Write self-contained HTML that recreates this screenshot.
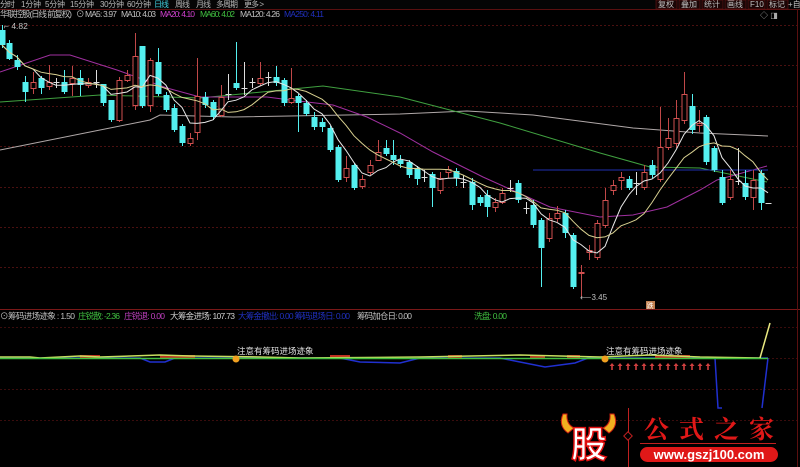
<!DOCTYPE html>
<html><head><meta charset="utf-8"><style>
body{margin:0;background:#000;width:800px;height:467px;overflow:hidden;font-family:"Liberation Sans","Noto Sans CJK SC",sans-serif}
svg{display:block}
</style></head><body>
<svg id="s" width="800" height="467" xmlns="http://www.w3.org/2000/svg" font-family="Liberation Sans, Noto Sans CJK SC, sans-serif">
<rect width="800" height="467" fill="#000"/>
<rect x="0" y="0" width="800" height="9" fill="#050505"/>
<line x1="0" y1="9.5" x2="800" y2="9.5" stroke="#5a1010"/>
<g font-size="8" fill="#b8b8b8" lengthAdjust="spacingAndGlyphs">
<text x="0" y="7" textLength="15">分时</text><text x="21" y="7" textLength="20">1分钟</text><text x="45" y="7" textLength="20">5分钟</text><text x="70" y="7" textLength="24">15分钟</text><text x="100" y="7" textLength="24">30分钟</text><text x="127" y="7" textLength="24">60分钟</text><text x="154" y="7" textLength="15" fill="#3fd0e0">日线</text><text x="175" y="7" textLength="15">周线</text><text x="196" y="7" textLength="15">月线</text><text x="216" y="7" textLength="22">多周期</text><text x="244" y="7" textLength="20">更多 &gt;</text>
</g>
<g font-size="8" fill="#c0c0c0">
<rect x="656" y="0" width="21" height="9" fill="#1a0505" stroke="#6a1515" stroke-width="0.6"/><text x="658" y="7">复权</text>
<rect x="679" y="0" width="21" height="9" fill="#1a0505" stroke="#6a1515" stroke-width="0.6"/><text x="681" y="7">叠加</text>
<rect x="702" y="0" width="21" height="9" fill="#1a0505" stroke="#6a1515" stroke-width="0.6"/><text x="704" y="7">统计</text>
<rect x="725" y="0" width="21" height="9" fill="#1a0505" stroke="#6a1515" stroke-width="0.6"/><text x="727" y="7">画线</text>
<rect x="748" y="0" width="17" height="9" fill="#1a0505" stroke="#6a1515" stroke-width="0.6"/><text x="750" y="7">F10</text>
<rect x="767" y="0" width="21" height="9" fill="#1a0505" stroke="#6a1515" stroke-width="0.6"/><text x="769" y="7">标记</text>
<text x="788" y="7">+自</text>
</g>
<g font-size="8.5" fill="#c0c0c0" lengthAdjust="spacingAndGlyphs">
<text x="0" y="17" textLength="72">华联控股(日线 前复权)</text><text x="76" y="17">⊙</text><text x="85" y="17" textLength="32">MA5: 3.97</text><text x="121" y="17" textLength="35">MA10: 4.03</text><text x="160" y="17" textLength="35" fill="#d040d0">MA20: 4.10</text><text x="200" y="17" textLength="35" fill="#40c040">MA60: 4.02</text><text x="240" y="17" textLength="40">MA120: 4.26</text><text x="284" y="17" textLength="40" fill="#2030c0">MA250: 4.11</text>
</g>
<text x="760" y="18" font-size="8" fill="#aaa">◇ ◨</text>
<g id="grid"></g>
<line x1="0" y1="309.5" x2="800" y2="309.5" stroke="#7a1818"/>
<line x1="797.5" y1="10" x2="797.5" y2="467" stroke="#5a1010"/>
<text x="4" y="29" font-size="8.5" fill="#c0c0c0">⌐ 4.82</text>
<g id="cand"></g>
<text x="580" y="300" font-size="8" fill="#c0c0c0">⟵3.45</text>
<rect x="646" y="301" width="9" height="8" fill="#c08050"/><text x="647" y="308" font-size="6.5" fill="#fff">跌</text>
<g font-size="8.5" fill="#c0c0c0" lengthAdjust="spacingAndGlyphs">
<text x="0" y="319">⊙</text>
<text x="8" y="319" textLength="67">筹码进场迹象 : 1.50</text>
<text x="78" y="319" textLength="42" fill="#40c040">庄锐散: -2.36</text>
<text x="124" y="319" textLength="41" fill="#c040c0">庄锐退: 0.00</text>
<text x="170" y="319" textLength="65" fill="#d0d0d0">大筹金进场: 107.73</text>
<text x="238" y="319" textLength="112" fill="#2030c0">大筹金撤出: 0.00 筹码退场日: 0.00</text>
<text x="357" y="319" textLength="55">筹码加仓日: 0.00</text>
<text x="474" y="319" textLength="33" fill="#40c040">洗盘: 0.00</text>
</g>
<g id="low"></g>
<path d="M563 414 Q558 426 568 433 L574 428 Q566 424 567 414Z" fill="#f0b020" stroke="#d02010"/>
<path d="M614 414 Q619 426 609 433 L603 428 Q611 424 610 414Z" fill="#f0b020" stroke="#d02010"/>
<text x="571" y="457" font-size="36" font-weight="bold" fill="#fff" stroke="#e01010" stroke-width="1.5" font-family="Noto Sans CJK SC, sans-serif">股</text>
<line x1="628.5" y1="408" x2="628.5" y2="467" stroke="#c02020"/>
<rect x="625" y="433" width="6" height="6" transform="rotate(45 628 436)" fill="#000" stroke="#c02020"/>
<text x="644" y="438" font-size="25" fill="#e01818" letter-spacing="10" font-family="Noto Serif CJK SC, serif" font-weight="bold">公式之家</text>
<line x1="640" y1="443.5" x2="776" y2="443.5" stroke="#c02020"/>
<rect x="640" y="447" width="138" height="15" rx="7.5" fill="#e01818"/>
<text x="709" y="459" font-size="13" font-weight="bold" fill="#fff" text-anchor="middle">www.gszj100.com</text>
</svg>
<script>
var NS="http://www.w3.org/2000/svg";
function el(p,t,a){var e=document.createElementNS(NS,t);for(var k in a)e.setAttribute(k,a[k]);p.appendChild(e);return e;}
var g=document.getElementById('grid');
[25,65,106,146,187,227,267].forEach(function(y){el(g,'line',{x1:0,y1:y+.5,x2:797,y2:y+.5,stroke:'#4a1010','stroke-dasharray':'2,2'});});
[327,358,389,420].forEach(function(y){el(g,'line',{x1:0,y1:y+.5,x2:797,y2:y+.5,stroke:'#3a0c0c','stroke-dasharray':'2,2'});});
var D=[[2,30,45,'c',25,48],[9,43,59,'c',40,60],[17,60,67,'c',55,70],[25,82,92,'c',76,102],[33,82,88,'r',72,94],[41,78,88,'c',76,94],[49,82,86,'r',65,90],[56,82,83,'x',78,88],[64,82,92,'c',70,94],[72,78,83,'r',66,96],[80,78,85,'c',70,96],[88,82,85,'r',78,88],[96,82,83,'x',70,88],[103,84,103,'c',84,106],[111,100,120,'c',100,122],[119,80,120,'r',77,122],[127,75,80,'r',70,82],[135,56,105,'r',33,110],[142,46,106,'c',46,108],[150,60,105,'r',58,112],[158,62,94,'c',48,96],[166,95,110,'c',92,112],[174,108,130,'c',104,132],[182,126,143,'c',124,146],[190,138,143,'r',133,146],[197,96,132,'r',58,140],[205,97,105,'c',92,108],[213,102,117,'c',100,120],[221,97,115,'r',85,117],[228,94,95,'x',74,100],[236,83,88,'c',42,90],[244,88,89,'x',62,95],[252,82,83,'x',78,88],[260,78,83,'r',62,86],[268,77,78,'x',72,86],[276,77,83,'c',66,86],[284,80,103,'c',78,106],[291,98,102,'r',68,104],[298,96,103,'c',94,132],[306,103,114,'c',100,116],[314,117,127,'c',112,130],[322,122,127,'c',118,132],[330,128,150,'c',126,152],[338,147,180,'c',145,182],[346,168,177,'r',156,182],[354,165,188,'c',163,190],[362,179,186,'r',175,189],[370,165,172,'r',160,175],[378,152,160,'r',140,160],[386,148,154,'c',140,156],[393,155,160,'c',140,165],[400,160,164,'c',155,168],[409,162,175,'c',160,178],[417,168,179,'c',166,185],[424,177,178,'x',170,182],[432,174,188,'c',172,207],[440,178,190,'r',172,194],[448,169,172,'r',166,178],[456,171,178,'c',168,186],[463,182,183,'x',175,188],[472,182,205,'c',178,210],[480,197,203,'c',195,206],[487,195,207,'c',190,217],[495,202,207,'r',198,212],[502,193,202,'r',188,204],[510,188,189,'x',180,192],[518,183,200,'c',180,203],[526,208,209,'x',202,214],[533,205,225,'c',200,228],[541,220,248,'c',218,287],[549,218,238,'r',213,242],[557,213,218,'r',206,222],[565,213,233,'c',210,238],[573,235,287,'c',233,289],[581,272,273,'r',265,297],[589,250,252,'r',245,260],[597,223,257,'r',220,260],[605,200,225,'r',188,228],[613,185,190,'r',180,195],[621,177,180,'r',172,190],[629,179,188,'c',176,190],[636,183,184,'x',172,195],[644,172,187,'r',165,190],[652,165,175,'c',160,178],[660,147,179,'r',107,182],[668,138,147,'r',118,150],[676,118,143,'r',100,148],[684,94,120,'r',72,124],[692,106,130,'c',94,134],[699,123,125,'r',110,132],[706,117,162,'c',115,165],[714,148,170,'c',146,172],[722,177,203,'c',170,205],[730,179,197,'r',170,200],[738,181,182,'x',148,185],[745,183,197,'c',170,200],[753,180,197,'r',170,210],[761,173,203,'c',170,210],[768,203,204,'x',203,204]];
var c=document.getElementById('cand');
function line(pts,col){el(c,'polyline',{points:pts.map(function(p){return p.join(',')}).join(' '),fill:'none',stroke:col,'stroke-width':1});}
line([[0,150],[150,120],[160,115],[233,117],[400,114],[467,111],[533,115],[633,128],[700,133],[768,136]],'#b0a8a8');
line([[0,102],[100,95],[200,98],[323,86],[400,97],[500,123],[600,153],[650,167],[700,168],[767,182]],'#40a040');
line([[0,72],[50,55],[70,55],[117,70],[167,88],[200,97],[267,97],[290,100],[333,105],[367,117],[400,133],[433,152],[483,177],[550,207],[600,217],[633,215],[667,207],[700,190],[717,180],[767,166]],'#a030a0');
line([[533,170],[768,170]],'#2030b0');
D.forEach(function(d){
  var x=d[0],col=d[3]=='c'?'#54f0f0':(d[3]=='r'?'#d05050':'#e0e0e0');
  el(c,'line',{x1:x+.5,y1:d[4],x2:x+.5,y2:d[5],stroke:d[3]=='c'?'#54f0f0':(d[3]=='r'?'#c04848':'#ddd')});
  if(d[3]=='c')el(c,'rect',{x:x-2.5,y:d[1],width:6,height:Math.max(1,d[2]-d[1]),fill:col});
  else if(d[3]=='r')el(c,'rect',{x:x-2,y:d[1]+.5,width:5,height:Math.max(1,d[2]-d[1]),fill:'#000',stroke:col});
  else el(c,'line',{x1:x-2.5,y1:d[1]+.5,x2:x+3.5,y2:d[1]+.5,stroke:'#ddd'});
});
var cl=D.map(function(d){return d[3]=='c'?d[2]:d[1];});
function ma(n,col){var p=[];for(var i=0;i<cl.length;i++){var s=0,k=0;for(var j=Math.max(0,i-n+1);j<=i;j++){s+=cl[j];k++;}p.push([D[i][0],(s/k).toFixed(1)]);}line(p,col);}
ma(5,'#e8e8e8');ma(10,'#d8d090');
var L=document.getElementById('low');
function pl(pts,col,w){el(L,'polyline',{points:pts.map(function(p){return p.join(',')}).join(' '),fill:'none',stroke:col,'stroke-width':w||1});}
pl([[0,358],[140,358],[150,362],[165,362],[175,358],[340,358],[360,362],[400,363],[420,358],[500,358],[520,362],[545,367],[575,363],[588,358],[768,358]],'#2030d0',1.5);
pl([[715,358],[718,408],[722,408]],'#2030d0',1.5);pl([[768,358],[762,408]],'#2030d0',1.5);
[[80,100],[160,195],[330,350],[448,462],[530,545],[567,580],[655,690]].forEach(function(r){el(L,'rect',{x:r[0],y:355,width:r[1]-r[0],height:3,fill:'#c03020'});});
pl([[0,357],[30,357],[40,358],[80,356],[100,357],[160,355],[190,356],[260,357],[300,358],[420,357],[520,355],[600,357],[650,355],[700,357],[760,358]],'#c8e060',1.5);
pl([[0,358.5],[768,358.5]],'#40c040',1.5);
pl([[760,358],[770,323]],'#e8e880',1.5);
[236,605].forEach(function(x){el(L,'circle',{cx:x,cy:359,r:3.5,fill:'#f0a020'});var t=el(L,'text',{x:x+1,y:354,'font-size':'8.5',fill:'#e0e0e0'});t.textContent='注意有筹码进场迹象';});
for(var x=612;x<=708;x+=8){el(L,'path',{d:'M'+x+' 363 l-2.5 3 h1.7 v4 h1.6 v-4 h1.7z',fill:'#d04040'});}
</script>
</body></html>
